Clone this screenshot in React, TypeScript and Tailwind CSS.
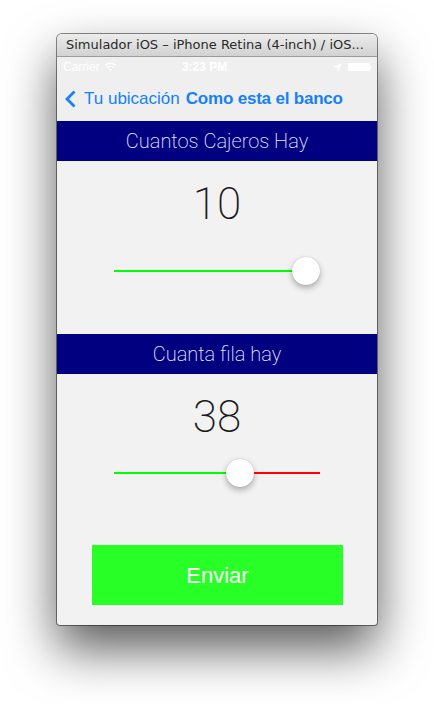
import React from "react";

function Slider({ green, red }: { green: number; red: number }) {
  return (
    <div className="flex items-center w-[206px] mx-auto">
      <div className="h-[2px] bg-[#00ff00]" style={{ width: green }} />
      <div className="w-[28px] h-[28px] rounded-full bg-white shrink-0 shadow-[0_3px_6px_rgba(0,0,0,0.3),0_0_1px_rgba(0,0,0,0.25)]" />
      {red > 0 && <div className="h-[2px] bg-[#ff0000]" style={{ width: red }} />}
    </div>
  );
}

export default function App() {
  return (
    <div className="w-[434px] h-[704px] bg-white overflow-hidden pt-[34px] pl-[57px]">
      <div className="w-[320px] rounded-t-[5px] rounded-b-[3px] bg-[#f2f2f2] shadow-[0_24px_50px_rgba(0,0,0,0.65),0_0_0_1px_rgba(0,0,0,0.45)] overflow-hidden">
        {/* title bar */}
        <div className="h-[23px] bg-gradient-to-b from-[#ececec] to-[#d2d2d2] border-b border-[#9a9a9a] flex items-center pl-[9px] text-[13px] text-[#2a2a2a] whitespace-nowrap" style={{ fontFamily: '"DejaVu Sans", sans-serif' }}>
          Simulador iOS – iPhone Retina (4-inch) / iOS...
        </div>
        {/* status bar */}
        <div className="h-[20px] bg-[#efefef] flex items-center px-[6px] text-white text-[12px] relative" style={{ fontFamily: '"Liberation Sans", sans-serif' }}>
          <span>Carrier</span>
          <svg className="ml-[4px]" width="13" height="10" viewBox="0 0 13 10">
            <path d="M1 3.5 A8 8 0 0 1 12 3.5" stroke="white" strokeWidth="1.5" fill="none" />
            <path d="M3 5.7 A5 5 0 0 1 10 5.7" stroke="white" strokeWidth="1.5" fill="none" />
            <path d="M6.5 9.5 L4.8 7.6 A2.5 2.5 0 0 1 8.2 7.6 Z" fill="white" />
          </svg>
          <span className="flex-1 text-center font-bold mr-[40px]">3:23 PM</span>
          <svg width="9" height="9" viewBox="0 0 9 9" className="mr-[6px]">
            <path d="M9 0 L0 4 L4.5 4.5 L5 9 Z" fill="white" />
          </svg>
          <div className="flex items-center">
            <div className="w-[22px] h-[8px] bg-white rounded-[1px]" />
            <div className="w-[1.5px] h-[3px] bg-white" />
          </div>
        </div>
        {/* nav bar */}
        <div className="h-[44px] bg-[#efefef] flex items-center pl-[8px] text-[17px] text-[#1580fa]" style={{ fontFamily: '"Liberation Sans", sans-serif' }}>
          <svg width="12" height="18" viewBox="0 0 12 18" className="mr-[7px]">
            <polyline points="9.5,1.5 2,9 9.5,16.5" stroke="#1580fa" strokeWidth="2.8" fill="none" strokeLinecap="butt" strokeLinejoin="miter" />
          </svg>
          <span>Tu ubicación</span>
          <span className="ml-[6px] font-bold tracking-[-0.2px]">Como esta el banco</span>
        </div>
        {/* section 1 */}
        <div className="h-[40px] bg-[#000080] flex items-center justify-center text-[20px] font-extralight text-[#ececff]" style={{ fontFamily: 'Roboto, "Liberation Sans", sans-serif' }}>
          Cuantos Cajeros Hay
        </div>
        <div className="h-[86px] flex items-center justify-center text-[44px] font-extralight leading-none text-[#1a1a1a]" style={{ fontFamily: 'Roboto, "Liberation Sans", sans-serif' }}>
          10
        </div>
        <div className="h-[48px] flex items-center">
          <Slider green={178} red={0} />
        </div>
        <div className="h-[39px]" />
        {/* section 2 */}
        <div className="h-[40px] bg-[#000080] flex items-center justify-center text-[20px] font-extralight text-[#ececff]" style={{ fontFamily: 'Roboto, "Liberation Sans", sans-serif' }}>
          Cuanta fila hay
        </div>
        <div className="h-[86px] flex items-center justify-center text-[44px] font-extralight leading-none text-[#1a1a1a]" style={{ fontFamily: 'Roboto, "Liberation Sans", sans-serif' }}>
          38
        </div>
        <div className="h-[26px] flex items-center">
          <Slider green={112} red={66} />
        </div>
        <div className="h-[59px]" />
        <div className="w-[251px] h-[60px] mx-[35px] bg-[#27ff27] flex items-center justify-center text-white text-[22px]" style={{ fontFamily: '"Liberation Sans", sans-serif' }}>
          Enviar
        </div>
        <div className="h-[20px]" />
      </div>
    </div>
  );
}
